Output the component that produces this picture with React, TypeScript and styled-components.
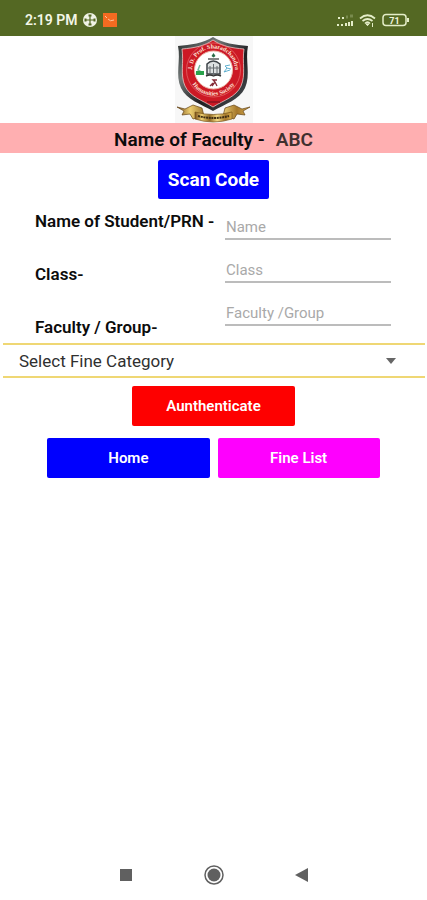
import React, { useState } from "react";
import styled, { createGlobalStyle } from "styled-components";

const GlobalStyle = createGlobalStyle`
  *, *::before, *::after { box-sizing: border-box; }
  body { margin: 0; background: #fff; font-family: Roboto, sans-serif; color: #0c0c0c; }
  button, input, select { font-family: inherit; }
`;

const Screen = styled.div`
  min-height: 100vh;
  display: flex;
  flex-direction: column;
`;

const StatusBar = styled.header`
  height: 36px;
  padding: 3px 17px 0 25px;
  display: flex;
  align-items: center;
  justify-content: space-between;
  background: #546823;
  color: #f3f6e6;
`;

const StatusGroup = styled.div`
  display: flex;
  align-items: center;
  gap: 5px;
`;

const Clock = styled.time`
  font-size: 14px;
  font-weight: 600;
`;

const Content = styled.main`
  flex: 1;
  display: flex;
  flex-direction: column;
`;

const CrestFrame = styled.div`
  display: flex;
  justify-content: center;
  svg { display: block; }
`;

const FacultyBanner = styled.h1`
  margin: 0;
  height: 30px;
  display: flex;
  align-items: center;
  justify-content: center;
  gap: 11px;
  padding-top: 2px;
  background: #ffafb1;
  font-size: 19px;
  font-weight: 600;
`;

const FacultyName = styled.span`
  color: #40302f;
`;

const Button = styled.button<{ $color: string; $large?: boolean }>`
  height: ${(p) => (p.$large ? 39 : 40)}px;
  width: ${(p) => (p.$large ? "26%" : "38%")};
  padding: 0;
  border: 0;
  border-radius: 2px;
  background: ${(p) => p.$color};
  color: #fff;
  font-size: ${(p) => (p.$large ? 19 : 15)}px;
  font-weight: ${(p) => (p.$large ? 700 : 600)};
  white-space: nowrap;
`;

const ButtonRow = styled.div<{ $top: number }>`
  display: flex;
  justify-content: center;
  gap: 8px;
  margin-top: ${(p) => p.$top}px;
`;

const Fields = styled.div`
  display: grid;
  grid-template-columns: 190px 1fr;
  padding: 0 36px 0 35px;
  margin-top: 8px;
`;

const Column = styled.div<{ $gap: number }>`
  display: flex;
  flex-direction: column;
  gap: ${(p) => p.$gap}px;
`;

const Label = styled.label`
  font-size: 17px;
  line-height: 28px;
  font-weight: 600;
  white-space: nowrap;
`;

const Input = styled.input`
  width: 100%;
  height: 33px;
  padding: 8px 1px 0;
  border: 0;
  border-bottom: 2px solid #bcbcbc;
  border-radius: 0;
  background: transparent;
  font-size: 15px;
  outline: none;
  &::placeholder { color: #a9a9a9; opacity: 1; }
`;

const SelectFrame = styled.div`
  display: grid;
  grid-template-columns: 1fr 40px;
  align-items: center;
  margin: 2px 2px 0 3px;
  border: solid #efd774;
  border-width: 2px 0;
  svg { grid-area: 1 / 2; pointer-events: none; justify-self: start; }
`;

const Select = styled.select`
  grid-area: 1 / 1 / 2 / 3;
  height: 31px;
  padding: 0 40px 0 16px;
  border: 0;
  background: transparent;
  appearance: none;
  color: #303030;
  font-size: 17px;
  outline: none;
`;

const NavBar = styled.nav`
  height: 50px;
  display: flex;
  align-items: center;
  justify-content: center;
  gap: 64px;
`;

const NavButton = styled.button`
  width: 24px;
  height: 24px;
  padding: 0;
  border: 0;
  background: none;
  svg { display: block; }
`;

const fields = [
  { id: "student", label: "Name of Student/PRN -", hint: "Name" },
  { id: "class", label: "Class-", hint: "Class" },
  { id: "group", label: "Faculty / Group-", hint: "Faculty /Group" },
];

function StatusIcons() {
  return (
    <svg width="74" height="18" viewBox="0 0 74 18" fill="none" stroke="#e4edc8" aria-label="Signal, Wi-Fi, battery">
      <path d="M2 7h2M6 7h2" strokeWidth="2" />
      <path d="M10 6h2M14 5h3" stroke="#788a4d" strokeWidth="3" />
      <path d="M1 14h2M5 14h2" strokeWidth="2" />
      <path d="M16 10v5M13 11v4M10 12v3" strokeWidth="2" />
      <path d="M24 7.500Q31.500 1 39 7.500M26.500 10Q31.500 6 36.500 10M29 12.500Q31.500 10 34 12.500" strokeWidth="1.700" />
      <path d="m30 13 1.500 1.700 1.500-1.700ZM36.500 12v4" fill="#e4edc8" />
      <rect x="47" y="3.500" width="23" height="11" rx="3" strokeWidth="1.500" />
      <path d="M72 7v4" strokeWidth="2" />
      <text x="58.500" y="12.500" textAnchor="middle" fill="#f0f5df" stroke="none" fontFamily="Roboto" fontWeight="700" fontSize="9">71</text>
    </svg>
  );
}

function Crest() {
  return (
    <svg width="78" height="87" viewBox="0 0 78 87" role="img" aria-label="College crest">
      <defs>
        <linearGradient id="steel" x2="1" y2="1">
          <stop stopColor="#242827" /><stop offset=".3" stopColor="#737978" />
          <stop offset=".6" stopColor="#1e1d20" /><stop offset="1" stopColor="#53595c" />
        </linearGradient>
        <linearGradient id="gold">
          <stop stopColor="#7c511c" /><stop offset=".18" stopColor="#edce70" />
          <stop offset=".4" stopColor="#926a24" /><stop offset=".6" stopColor="#f5dc83" />
          <stop offset=".82" stopColor="#a6782b" /><stop offset="1" stopColor="#d7ad4d" />
        </linearGradient>
        <path id="upper-motto" d="M19 43a21.500 21.500 0 1 1 39 0" />
        <path id="lower-motto" d="M13.500 39a25.500 25.500 0 0 0 50 0" />
      </defs>
      <path fill="#f7f7f7" d="M0 0h78v87H0Z" />
      <path d="m2 71 8 2 8-4 9 3 2 8-11 3-3-5-8 1 2-4ZM75 71l-8 2-8-4-9 3-2 8 11 3 3-5 8 1-2-4Z" fill="url(#gold)" stroke="#644315" strokeWidth=".7" />
      <path d="M38 1C29 7 15 9 3 10c3 14-3 29 3 42 6 12 20 16 32 23 12-7 26-11 32-23 6-13 0-28 3-42C61 9 47 7 38 1Z" fill="url(#steel)" />
      <path d="M38 4C30 10 19 12 7 13c2 13-2 26 3 37 5 11 17 14 28 21 11-7 23-10 28-21 5-11 1-24 3-37C57 12 46 10 38 4Z" fill="#cc1925" stroke="#f4dbd9" strokeWidth=".7" />
      <circle cx="38.500" cy="34" r="27" fill="none" stroke="#ed7a7a" strokeWidth=".6" />
      <circle cx="38.500" cy="34" r="19" fill="#fff" stroke="#edb8a9" strokeWidth="1" />
      <g fill="#ffe5d8" fontFamily="Liberation Serif" fontWeight="700">
        <text fontSize="6"><textPath href="#upper-motto" startOffset="50%" textAnchor="middle">J. D. Prof. Sharadchandra</textPath></text>
        <text fontSize="6"><textPath href="#lower-motto" startOffset="50%" textAnchor="middle">Humanities Society</textPath></text>
      </g>
      <path d="M32 28q6-6 13 0v10H32Z" fill="#dce0e1" stroke="#3d4348" strokeWidth="1.500" />
      <path d="M35 30v7m3.500-9v10M42 30v7M32 32h13" stroke="#666c70" />
      <path d="M31 40q4-2 7.500 0 3.500-2 7.500 0" fill="none" stroke="#333" strokeWidth="1.400" />
      <path d="m38.500 17 2 3-2 1.500-2-1.500Z" fill="#286b45" /><path d="M33 23h11" stroke="#333" strokeWidth="1.200" />
      <path d="m25 29-2 5 5 3" fill="none" stroke="#73b99c" strokeWidth="1.500" /><path d="M21 35h8v4h-8Z" fill="#29a24b" />
      <path d="m49 36 3-4-2-2 5-1m-3 3 4 1m-7 3 6-2" stroke="#61b0cf" fill="none" />
      <path d="m37 50 3-4-2-2h4m-2 2 2 4m-7 0 3-3" stroke="#852d38" fill="none" strokeWidth="1.300" />
      <path d="M32 66h13" stroke="#88131f" strokeWidth="1.500" />
      <path d="M20 76q18 5 37 0v7q-19 6-37 0Z" fill="url(#gold)" stroke="#755118" strokeWidth=".7" />
      <path d="M23 80q16 4 31 0" fill="none" stroke="#3f2d13" strokeWidth="2" strokeDasharray="2 .7" />
    </svg>
  );
}

export default function App() {
  const [category, setCategory] = useState("");
  return (
    <>
      <GlobalStyle />
      <Screen>
        <StatusBar>
          <StatusGroup>
            <Clock>2:19 PM</Clock>
            <svg width="34" height="16" viewBox="0 0 34 16" aria-hidden="true">
              <circle cx="7" cy="8" r="7" fill="#f0f3e5" />
              <path d="M7 3v10M2 8h10" stroke="#546823" strokeWidth="1.200" />
              <path d="M5.500 3.500h3M5.500 12.500h3M2.500 6.500v3M11.500 6.500v3" stroke="#546823" strokeWidth="2" />
              <path fill="#f36b21" d="M20 1h14v14H20Z" />
              <path d="M22 4l2 2m1 1q2 3 6 1" fill="none" stroke="#ffc49c" />
            </svg>
          </StatusGroup>
          <StatusIcons />
        </StatusBar>
        <Content>
          <CrestFrame><Crest /></CrestFrame>
          <FacultyBanner>Name of Faculty - <FacultyName>ABC</FacultyName></FacultyBanner>
          <ButtonRow $top={7}><Button type="button" $color="#0000fe" $large>Scan Code</Button></ButtonRow>
          <Fields>
            <Column $gap={25}>
              {fields.map((f) => <Label key={f.id} htmlFor={f.id}>{f.label}</Label>)}
            </Column>
            <Column $gap={10}>
              {fields.map((f) => <Input key={f.id} id={f.id} placeholder={f.hint} />)}
            </Column>
          </Fields>
          <SelectFrame>
            <Select aria-label="Fine category" value={category} onChange={(e) => setCategory(e.target.value)}>
              <option value="">Select Fine Category</option>
            </Select>
            <svg width="12" height="6" viewBox="0 0 12 6" aria-hidden="true"><path d="M1 0h10L6 6Z" fill="#666" /></svg>
          </SelectFrame>
          <ButtonRow $top={8}><Button type="button" $color="#fe0000">Aunthenticate</Button></ButtonRow>
          <ButtonRow $top={12}>
            <Button type="button" $color="#0000fe">Home</Button>
            <Button type="button" $color="#fe00fe">Fine List</Button>
          </ButtonRow>
        </Content>
        <NavBar aria-label="System navigation">
          <NavButton type="button" aria-label="Recent apps"><svg width="24" height="24"><path d="M6 6h12v12H6Z" fill="#606060" /></svg></NavButton>
          <NavButton type="button" aria-label="Home screen"><svg width="24" height="24"><circle cx="12" cy="12" r="9" fill="none" stroke="#606060" strokeWidth="1.500" /><circle cx="12" cy="12" r="6.500" fill="#606060" /></svg></NavButton>
          <NavButton type="button" aria-label="Back"><svg width="24" height="24"><path d="M18 5v14L5 12Z" fill="#606060" /></svg></NavButton>
        </NavBar>
      </Screen>
    </>
  );
}
